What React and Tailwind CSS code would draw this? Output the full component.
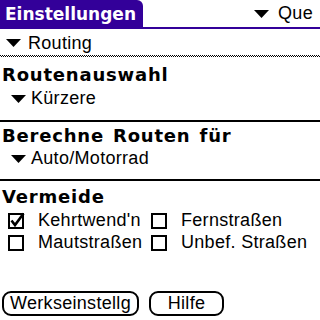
import React from 'react';

// small black "pop-up" triangle used in front of every picker
const Arrow = () => (
  <svg width="15" height="8" viewBox="0 0 15 8" className="shrink-0">
    <polygon points="0,0 15,0 7.5,8" fill="#000" />
  </svg>
);

const Box = ({ checked }) => (
  <svg width="17" height="17" viewBox="0 0 17 17" className="shrink-0 overflow-visible">
    <rect x="1" y="2" width="14" height="14" fill="none" stroke="#000" strokeWidth="2" />
    {checked && <path d="M3.5 8.5 L7 13 L15.5 1.5" fill="none" stroke="#000" strokeWidth="2.6" />}
  </svg>
);

const Heading = ({ children, cls }) => (
  <div
    className={`flex items-center pl-[2px] text-[18px] font-bold tracking-[0.8px] [word-spacing:2px] ${cls}`}
    style={{ fontFamily: '"DejaVu Sans", sans-serif' }}
  >
    {children}
  </div>
);

const Check = ({ checked, label, w }) => (
  <div className={`flex items-center gap-[13px] ${w}`}>
    <Box checked={checked} />
    <span>{label}</span>
  </div>
);

export default function App() {
  return (
    <div
      className="w-[320px] h-[320px] bg-white text-black flex flex-col overflow-hidden tracking-[0.3px]"
      style={{ fontFamily: '"Liberation Sans", Arial, sans-serif' }}
    >
      {/* title bar */}
      <div className="flex h-[29px]">
        <div
          className="bg-[#330099] text-white font-bold text-[17px] tracking-normal rounded-tr-[6px] pl-[5px] flex items-center h-[29px] w-[143px]"
          style={{ fontFamily: '"DejaVu Sans", sans-serif' }}
        >
          Einstellungen
        </div>
        <div className="flex-1 flex flex-col">
          <div className="flex-1 flex items-center justify-end gap-[9px] text-[18px] pr-[7px]">
            <Arrow />
            <span>Que</span>
          </div>
          <div className="h-[3px] bg-[#330099]" />
        </div>
      </div>

      <div className="flex items-center gap-[7px] h-[26px] pt-[2px] pl-[6px] text-[18px]">
        <Arrow />
        <span>Routing</span>
      </div>
      <div className="h-px bg-[repeating-linear-gradient(90deg,#000_0_1px,transparent_1px_2px)]" />
      <div className="h-px bg-[repeating-linear-gradient(90deg,transparent_0_1px,#000_1px_2px)]" />

      <Heading cls="h-[28px] mt-[3px]">Routenauswahl</Heading>
      <div className="flex items-center gap-[5px] h-[21px] pl-[11px] text-[18px]">
        <Arrow />
        <span>Kürzere</span>
      </div>
      <div className="h-[2px] bg-black mt-[11px]" />

      <Heading cls="h-[27px]">Berechne Routen für</Heading>
      <div className="flex items-center gap-[5px] h-[19px] pl-[11px] text-[18px]">
        <Arrow />
        <span>Auto/Motorrad</span>
      </div>
      <div className="h-[2px] bg-black mt-[11px]" />

      <Heading cls="h-[26px] pt-[4px]">Vermeide</Heading>
      <div className="flex flex-col text-[18px] pl-[8px]">
        <div className="flex items-center h-[24px] pt-[2px]">
          <Check checked label="Kehrtwend'n" w="w-[143px]" />
          <Check label="Fernstraßen" />
        </div>
        <div className="flex items-center h-[23px]">
          <Check label="Mautstraßen" w="w-[143px]" />
          <Check label="Unbef. Straßen" />
        </div>
      </div>

      <div className="mt-auto mb-[4px] flex gap-[10px] pl-[2px] text-[18px]">
        <button className="h-[25px] w-[137px] border-2 border-black rounded-[9px] flex items-center justify-center">
          Werkseinstellg
        </button>
        <button className="h-[25px] w-[75px] border-2 border-black rounded-[9px] flex items-center justify-center">
          Hilfe
        </button>
      </div>
    </div>
  );
}
